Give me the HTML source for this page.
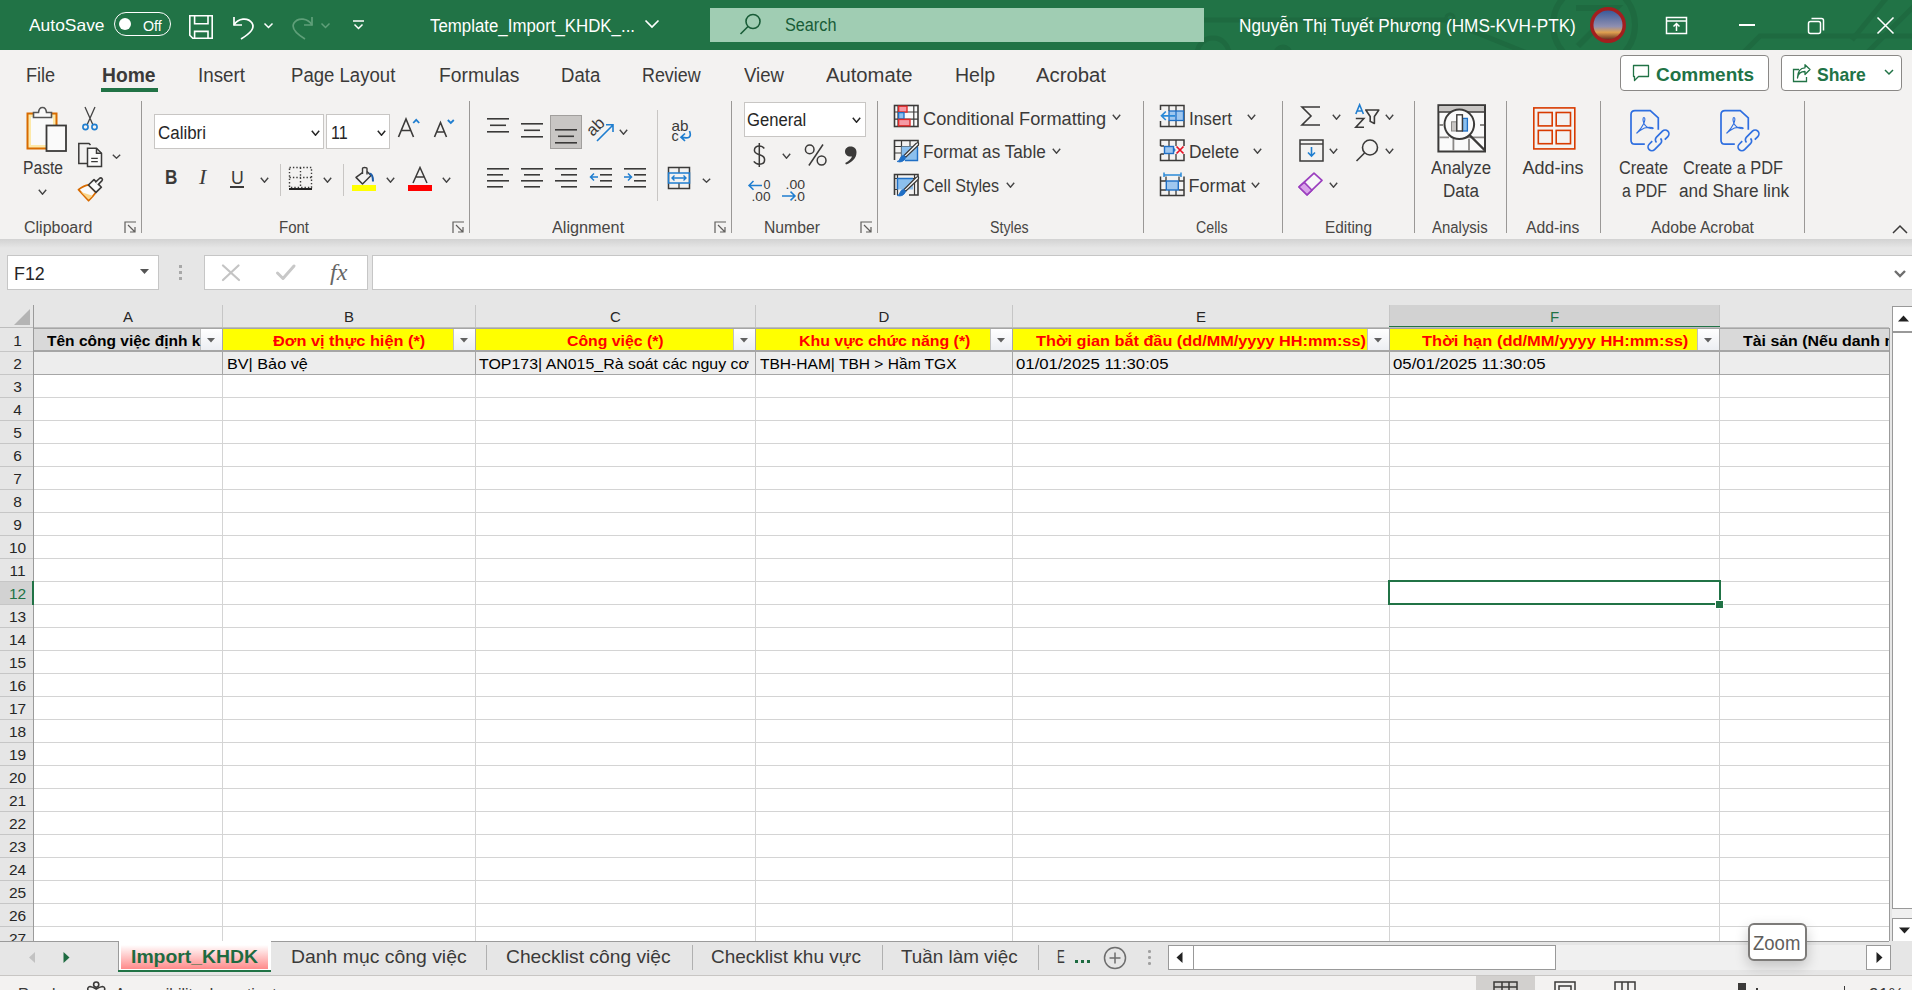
<!DOCTYPE html><html><head><meta charset="utf-8"><style>
html,body{margin:0;padding:0;width:1912px;height:990px;overflow:hidden;background:#f3f2f1;position:relative}
</style></head><body>
<div style="position:absolute;left:0;top:0;width:1912px;height:50px;background:#217346;overflow:hidden">
<svg width="1912" height="50" style="position:absolute;left:0;top:0" fill="none" stroke="#1e6a40" stroke-width="5">
<path d="M1204 20 H1445 L1532 55"/><circle cx="1450" cy="18" r="4" stroke-width="3"/><circle cx="1213" cy="54" r="16"/><circle cx="1283" cy="54" r="7"/>
<circle cx="1594" cy="25" r="41" stroke-width="6"/><path d="M1576 8 H1616 L1578 46" stroke-width="6"/>
<path d="M1742 54 L1760 36 H1912"/><path d="M1852 40 L1888 -4"/><path d="M1866 54 L1914 6"/></svg>
</div>
<div style="position:absolute;left:29px;top:16.83px;font:normal 16.5px/16.5px 'Liberation Sans', sans-serif;color:#fff;white-space:nowrap;"><span id="t_autosave" style="display:inline-block;transform:scaleX(1.0556);transform-origin:left;">AutoSave</span></div>
<div style="position:absolute;left:114px;top:12px;width:57px;height:24px;border:1.3px solid #fff;border-radius:12px;box-sizing:border-box"></div>
<div style="position:absolute;left:119px;top:18px;width:12px;height:12px;background:#fff;border-radius:50%"></div>
<div style="position:absolute;left:143px;top:18.30px;font:normal 15px/15px 'Liberation Sans', sans-serif;color:#fff;white-space:nowrap;"><span id="t_off" style="display:inline-block;transform:scaleX(0.9500);transform-origin:left;">Off</span></div>
<svg style="position:absolute;left:188px;top:14px" width="26" height="26" viewBox="0 0 26 26" fill="none" stroke="#fff" stroke-width="1.6">
<path d="M1.8 1.8 H24.2 V24.2 H4.8 L1.8 21.2 Z"/><path d="M6.6 1.8 V9.8 H20 V1.8"/><path d="M6.6 24.2 V17.4 H20 V24.2"/></svg>
<svg style="position:absolute;left:231px;top:14px" width="26" height="26" viewBox="0 0 26 26" fill="none" stroke="#fff" stroke-width="1.7">
<path d="M3 3 V11 H11"/><path d="M3 11 C7 4 17 3 21 9 C24 14 20 19 10 25"/></svg>
<svg style="position:absolute;left:263px;top:21px" width="11" height="9" viewBox="0 0 11 9" fill="none" stroke="#fff" stroke-width="1.5"><path d="M1.5 2.5 L5.5 6.5 L9.5 2.5"/></svg>
<svg style="position:absolute;left:289px;top:14px" width="26" height="26" viewBox="0 0 26 26" fill="none" stroke="#5f9f79" stroke-width="1.7">
<path d="M23 3 V11 H15"/><path d="M23 11 C19 4 9 3 5 9 C2 14 6 19 16 25"/></svg>
<svg style="position:absolute;left:320px;top:21px" width="11" height="9" viewBox="0 0 11 9" fill="none" stroke="#5f9f79" stroke-width="1.5"><path d="M1.5 2.5 L5.5 6.5 L9.5 2.5"/></svg>
<svg style="position:absolute;left:352px;top:19px" width="13" height="13" viewBox="0 0 13 13" fill="none" stroke="#fff" stroke-width="1.5"><path d="M1 2 H12"/><path d="M2.5 5.5 L6.5 9.5 L10.5 5.5"/></svg>
<div style="position:absolute;left:430px;top:18.19px;font:normal 17.5px/17.5px 'Liberation Sans', sans-serif;color:#fff;white-space:nowrap;"><span id="t_title" style="display:inline-block;transform:scaleX(0.9624);transform-origin:left;">Template_Import_KHDK_...</span></div>
<svg style="position:absolute;left:644px;top:18px" width="16" height="12" viewBox="0 0 16 12" fill="none" stroke="#fff" stroke-width="1.7"><path d="M1.5 2.5 L8 9 L14.5 2.5"/></svg>
<div style="position:absolute;left:710px;top:8px;width:494px;height:34px;background:#a0cdb3"></div>
<svg style="position:absolute;left:738px;top:12px" width="26" height="26" viewBox="0 0 26 26" fill="none" stroke="#185c37" stroke-width="1.6"><circle cx="15" cy="9.5" r="7"/><path d="M10 14.5 L2.5 22"/></svg>
<div style="position:absolute;left:784.5px;top:16.89px;font:normal 17.5px/17.5px 'Liberation Sans', sans-serif;color:#185c37;white-space:nowrap;"><span id="t_search" style="display:inline-block;transform:scaleX(0.9273);transform-origin:left;">Search</span></div>
<div style="position:absolute;left:1239px;top:18.19px;font:normal 17.5px/17.5px 'Liberation Sans', sans-serif;color:#fff;white-space:nowrap;"><span id="t_user" style="display:inline-block;transform:scaleX(0.9825);transform-origin:left;">Nguyễn Thị Tuyết Phương (HMS-KVH-PTK)</span></div>
<svg style="position:absolute;left:1589px;top:6px" width="38" height="38" viewBox="0 0 38 38">
<defs><linearGradient id="av" x1="0" y1="0" x2="0" y2="1"><stop offset="0" stop-color="#3a5a9a"/><stop offset="0.55" stop-color="#8f8fb0"/><stop offset="0.75" stop-color="#e0a050"/><stop offset="1" stop-color="#6a3020"/></linearGradient></defs>
<circle cx="19" cy="19" r="18" fill="#a31e1e"/><circle cx="19" cy="19" r="14.5" fill="url(#av)"/></svg>
<svg style="position:absolute;left:1665px;top:16px" width="24" height="20" viewBox="0 0 24 20" fill="none" stroke="#fff" stroke-width="1.5"><rect x="1.5" y="1.5" width="20" height="16"/><path d="M1.5 5 H21.5"/><path d="M11.5 15 V8 M8.5 10.5 L11.5 7.5 L14.5 10.5"/></svg>
<div style="position:absolute;left:1739px;top:24px;width:16px;height:1.5px;background:#fff"></div>
<svg style="position:absolute;left:1806px;top:16px" width="20" height="20" viewBox="0 0 20 20" fill="none" stroke="#fff" stroke-width="1.5"><rect x="2.5" y="5.5" width="12" height="12" rx="2"/><path d="M5.5 2.5 H15.5 Q17.5 2.5 17.5 4.5 V14.5"/></svg>
<svg style="position:absolute;left:1876px;top:16px" width="19" height="19" viewBox="0 0 19 19" fill="none" stroke="#fff" stroke-width="1.6"><path d="M1.5 1.5 L17.5 17.5 M17.5 1.5 L1.5 17.5"/></svg>
<div style="position:absolute;left:0px;top:50px;width:1912px;height:189px;background:#f3f2f1"></div>
<div style="position:absolute;left:26px;top:65.07px;font:normal 20px/20px 'Liberation Sans', sans-serif;color:#3b3a39;white-space:nowrap;"><span id="tab0" style="display:inline-block;transform:scaleX(0.9062);transform-origin:left;">File</span></div>
<div style="position:absolute;left:102px;top:65.07px;font:bold 20px/20px 'Liberation Sans', sans-serif;color:#3b3a39;white-space:nowrap;"><span id="tab1" style="display:inline-block;transform:scaleX(0.9643);transform-origin:left;">Home</span></div>
<div style="position:absolute;left:198px;top:65.07px;font:normal 20px/20px 'Liberation Sans', sans-serif;color:#3b3a39;white-space:nowrap;"><span id="tab2" style="display:inline-block;transform:scaleX(0.9400);transform-origin:left;">Insert</span></div>
<div style="position:absolute;left:291px;top:65.07px;font:normal 20px/20px 'Liberation Sans', sans-serif;color:#3b3a39;white-space:nowrap;"><span id="tab3" style="display:inline-block;transform:scaleX(0.9286);transform-origin:left;">Page Layout</span></div>
<div style="position:absolute;left:439px;top:65.07px;font:normal 20px/20px 'Liberation Sans', sans-serif;color:#3b3a39;white-space:nowrap;"><span id="tab4" style="display:inline-block;transform:scaleX(0.9639);transform-origin:left;">Formulas</span></div>
<div style="position:absolute;left:561px;top:65.07px;font:normal 20px/20px 'Liberation Sans', sans-serif;color:#3b3a39;white-space:nowrap;"><span id="tab5" style="display:inline-block;transform:scaleX(0.9286);transform-origin:left;">Data</span></div>
<div style="position:absolute;left:642px;top:65.07px;font:normal 20px/20px 'Liberation Sans', sans-serif;color:#3b3a39;white-space:nowrap;"><span id="tab6" style="display:inline-block;transform:scaleX(0.8939);transform-origin:left;">Review</span></div>
<div style="position:absolute;left:744px;top:65.07px;font:normal 20px/20px 'Liberation Sans', sans-serif;color:#3b3a39;white-space:nowrap;"><span id="tab7" style="display:inline-block;transform:scaleX(0.9302);transform-origin:left;">View</span></div>
<div style="position:absolute;left:826px;top:65.07px;font:normal 20px/20px 'Liberation Sans', sans-serif;color:#3b3a39;white-space:nowrap;"><span id="tab8" style="display:inline-block;transform:scaleX(1.0116);transform-origin:left;">Automate</span></div>
<div style="position:absolute;left:955px;top:65.07px;font:normal 20px/20px 'Liberation Sans', sans-serif;color:#3b3a39;white-space:nowrap;"><span id="tab9" style="display:inline-block;transform:scaleX(0.9756);transform-origin:left;">Help</span></div>
<div style="position:absolute;left:1036px;top:65.07px;font:normal 20px/20px 'Liberation Sans', sans-serif;color:#3b3a39;white-space:nowrap;"><span id="tab10" style="display:inline-block;transform:scaleX(1.0145);transform-origin:left;">Acrobat</span></div>
<div style="position:absolute;left:101px;top:88px;width:57px;height:4px;background:#217346"></div>
<div style="position:absolute;left:1620px;top:55px;width:149px;height:36px;border:1px solid #8a8886;border-radius:4px;box-sizing:border-box;background:#fff"></div>
<svg style="position:absolute;left:1630px;top:63px" width="22" height="22" viewBox="0 0 22 22" fill="none" stroke="#217346" stroke-width="1.3"><path d="M3.5 2.5 H18.5 V13.5 H8.5 L4.5 17.5 V13.5 H3.5 Z" stroke-linejoin="round"/></svg>
<div style="position:absolute;left:1656px;top:64.92px;font:bold 19px/19px 'Liberation Sans', sans-serif;color:#217346;white-space:nowrap;"><span id="t_comments" style="display:inline-block;transform:scaleX(1.0000);transform-origin:left;">Comments</span></div>
<div style="position:absolute;left:1781px;top:55px;width:121px;height:36px;border:1px solid #8a8886;border-radius:4px;box-sizing:border-box;background:#fff"></div>
<svg style="position:absolute;left:1791px;top:63px" width="22" height="22" viewBox="0 0 22 22" fill="none" stroke="#217346" stroke-width="1.3"><path d="M8 6.5 H2.5 V18.5 H15.5 V14"/><path d="M6.5 15 C7 10.5 10 8.5 14 8.5 V11.5 L19 6.5 L14 1.8 V4.8 C9.5 4.8 6.5 8.5 6.5 15 Z" stroke-linejoin="round"/></svg>
<div style="position:absolute;left:1817px;top:64.92px;font:bold 19px/19px 'Liberation Sans', sans-serif;color:#217346;white-space:nowrap;"><span id="t_share" style="display:inline-block;transform:scaleX(0.9245);transform-origin:left;">Share</span></div>
<svg style="position:absolute;left:1884px;top:68px" width="10" height="8" viewBox="0 0 10 8" fill="none" stroke="#217346" stroke-width="1.5"><path d="M1 2 L5 6 L9 2"/></svg>
<div style="position:absolute;left:141px;top:101px;width:1px;height:132px;background:#9a9896"></div>
<div style="position:absolute;left:469px;top:101px;width:1px;height:132px;background:#9a9896"></div>
<div style="position:absolute;left:731px;top:101px;width:1px;height:132px;background:#9a9896"></div>
<div style="position:absolute;left:877px;top:101px;width:1px;height:132px;background:#9a9896"></div>
<div style="position:absolute;left:1143px;top:101px;width:1px;height:132px;background:#9a9896"></div>
<div style="position:absolute;left:1282px;top:101px;width:1px;height:132px;background:#9a9896"></div>
<div style="position:absolute;left:1414px;top:101px;width:1px;height:132px;background:#9a9896"></div>
<div style="position:absolute;left:1506px;top:101px;width:1px;height:132px;background:#9a9896"></div>
<div style="position:absolute;left:1600px;top:101px;width:1px;height:132px;background:#9a9896"></div>
<div style="position:absolute;left:1804px;top:101px;width:1px;height:132px;background:#9a9896"></div>
<div style="position:absolute;left:24px;top:220.46px;font:normal 16px/16px 'Liberation Sans', sans-serif;color:#484644;white-space:nowrap;"><span id="g_clip" style="display:inline-block;transform:scaleX(1.0000);transform-origin:left;">Clipboard</span></div>
<div style="position:absolute;left:279px;top:220.46px;font:normal 16px/16px 'Liberation Sans', sans-serif;color:#484644;white-space:nowrap;"><span id="g_font" style="display:inline-block;transform:scaleX(0.9375);transform-origin:left;">Font</span></div>
<div style="position:absolute;left:552px;top:220.46px;font:normal 16px/16px 'Liberation Sans', sans-serif;color:#484644;white-space:nowrap;"><span id="g_align" style="display:inline-block;transform:scaleX(1.0141);transform-origin:left;">Alignment</span></div>
<div style="position:absolute;left:764px;top:220.46px;font:normal 16px/16px 'Liberation Sans', sans-serif;color:#484644;white-space:nowrap;"><span id="g_num" style="display:inline-block;transform:scaleX(0.9825);transform-origin:left;">Number</span></div>
<div style="position:absolute;left:990px;top:220.46px;font:normal 16px/16px 'Liberation Sans', sans-serif;color:#484644;white-space:nowrap;"><span id="g_sty" style="display:inline-block;transform:scaleX(0.8864);transform-origin:left;">Styles</span></div>
<div style="position:absolute;left:1196px;top:220.46px;font:normal 16px/16px 'Liberation Sans', sans-serif;color:#484644;white-space:nowrap;"><span id="g_cells" style="display:inline-block;transform:scaleX(0.8889);transform-origin:left;">Cells</span></div>
<div style="position:absolute;left:1325px;top:220.46px;font:normal 16px/16px 'Liberation Sans', sans-serif;color:#484644;white-space:nowrap;"><span id="g_edit" style="display:inline-block;transform:scaleX(0.9592);transform-origin:left;">Editing</span></div>
<div style="position:absolute;left:1432px;top:220.46px;font:normal 16px/16px 'Liberation Sans', sans-serif;color:#484644;white-space:nowrap;"><span id="g_ana" style="display:inline-block;transform:scaleX(0.9333);transform-origin:left;">Analysis</span></div>
<div style="position:absolute;left:1526px;top:220.46px;font:normal 16px/16px 'Liberation Sans', sans-serif;color:#484644;white-space:nowrap;"><span id="g_addins" style="display:inline-block;transform:scaleX(0.9815);transform-origin:left;">Add-ins</span></div>
<div style="position:absolute;left:1651px;top:220.46px;font:normal 16px/16px 'Liberation Sans', sans-serif;color:#484644;white-space:nowrap;"><span id="g_adobe" style="display:inline-block;transform:scaleX(0.9810);transform-origin:left;">Adobe Acrobat</span></div>
<svg style="position:absolute;left:124px;top:221px" width="13" height="13" viewBox="0 0 13 13" fill="none" stroke="#605e5c" stroke-width="1.2"><path d="M1 12 V1 H12"/><path d="M4 4 L11 11 M11 6 V11 H6"/></svg>
<svg style="position:absolute;left:452px;top:221px" width="13" height="13" viewBox="0 0 13 13" fill="none" stroke="#605e5c" stroke-width="1.2"><path d="M1 12 V1 H12"/><path d="M4 4 L11 11 M11 6 V11 H6"/></svg>
<svg style="position:absolute;left:714px;top:221px" width="13" height="13" viewBox="0 0 13 13" fill="none" stroke="#605e5c" stroke-width="1.2"><path d="M1 12 V1 H12"/><path d="M4 4 L11 11 M11 6 V11 H6"/></svg>
<svg style="position:absolute;left:860px;top:221px" width="13" height="13" viewBox="0 0 13 13" fill="none" stroke="#605e5c" stroke-width="1.2"><path d="M1 12 V1 H12"/><path d="M4 4 L11 11 M11 6 V11 H6"/></svg>
<div id="ribbon-icons"></div>
<svg style="position:absolute;left:24px;top:105px" width="46" height="50" viewBox="0 0 46 50">
<rect x="3.5" y="8.5" width="29" height="35" fill="#fde9a9" stroke="#d86b00" stroke-width="2"/>
<rect x="7" y="12" width="22" height="28" fill="#fafafa" stroke="none"/>
<path d="M9.5 12.5 V7.5 H14.5 Q15 2.5 18.5 2.5 Q22 2.5 22.5 7.5 H27.5 V12.5 Z" fill="#fafafa" stroke="#555" stroke-width="1.6"/>
<rect x="22.5" y="20.5" width="19.5" height="25.5" fill="#fafafa" stroke="#3b3a39" stroke-width="1.8"/></svg>
<div style="position:absolute;left:23px;top:159.26px;font:normal 18px/18px 'Liberation Sans', sans-serif;color:#3b3a39;white-space:nowrap;"><span id="t_paste" style="display:inline-block;transform:scaleX(0.8696);transform-origin:left;">Paste</span></div>
<svg style="position:absolute;left:38px;top:189px" width="9" height="6" viewBox="0 0 9 6" fill="none" stroke="#444" stroke-width="1.4"><path d="M0.8 0.8 L4.5 5.2 L8.2 0.8"/></svg>
<svg style="position:absolute;left:81px;top:106px" width="18" height="26" viewBox="0 0 18 26" fill="none">
<path d="M4 1 L12 19 M14 1 L6 19" stroke="#444" stroke-width="1.3"/>
<circle cx="4.5" cy="21" r="2.6" stroke="#1f7ed0" stroke-width="1.6"/><circle cx="13.5" cy="21" r="2.6" stroke="#1f7ed0" stroke-width="1.6"/></svg>
<svg style="position:absolute;left:77px;top:142px" width="26" height="26" viewBox="0 0 26 26" fill="none" stroke="#3b3a39" stroke-width="1.5">
<path d="M10 21.5 H1.8 V1.5 H12 L13.5 3"/><path d="M10.5 6.2 H19.5 L24.5 11.2 V24.5 H10.5 Z" fill="#fafafa"/><path d="M19.5 6.2 V11.2 H24.5"/><path d="M14.2 16.3 H20.8 M14.2 19.7 H20.8" stroke-width="1.3"/></svg>
<svg style="position:absolute;left:112px;top:154px" width="9" height="5" viewBox="0 0 9 5" fill="none" stroke="#444" stroke-width="1.4"><path d="M0.8 0.8 L4.5 4.2 L8.2 0.8"/></svg>
<svg style="position:absolute;left:75px;top:175px" width="32" height="30" viewBox="0 0 32 30" fill="none">
<path d="M3.5 14.6 Q9 10.5 13.6 9.8 L21 17.3 Q17.5 22 13.6 25.7 Z" fill="#fafafa" stroke="#d86b00" stroke-width="1.8" stroke-linejoin="round"/>
<path d="M6 17 L17.6 20.8 L13.6 24.6 Z" fill="#fbd68a"/>
<path d="M13.4 10 L19 4.6 L26.4 12.2 L21 17.4 Z" fill="#fafafa" stroke="#3b3a39" stroke-width="1.6" stroke-linejoin="round"/>
<path d="M20.3 7.3 L24.4 3.5 Q25.9 2.4 27 3.5 Q28 4.6 26.8 5.9 L22.9 9.9" fill="#fafafa" stroke="#3b3a39" stroke-width="1.6"/></svg>
<div style="position:absolute;left:154px;top:114px;width:170px;height:35px;background:#fff;border:1px solid #c8c6c4;box-sizing:border-box"></div>
<div style="position:absolute;left:157.5px;top:123.76px;font:normal 18px/18px 'Liberation Sans', sans-serif;color:#262626;white-space:nowrap;"><span id="t_calibri" style="display:inline-block;transform:scaleX(0.9412);transform-origin:left;">Calibri</span></div>
<svg style="position:absolute;left:311px;top:129.5px" width="9" height="6" viewBox="0 0 9 6" fill="none" stroke="#262626" stroke-width="1.5"><path d="M0.8 0.8 L4.5 5.2 L8.2 0.8"/></svg>
<div style="position:absolute;left:326px;top:114px;width:64px;height:35px;background:#fff;border:1px solid #c8c6c4;box-sizing:border-box"></div>
<div style="position:absolute;left:331px;top:123.76px;font:normal 18px/18px 'Liberation Sans', sans-serif;color:#262626;white-space:nowrap;"><span id="t_11" style="display:inline-block;transform:scaleX(0.8947);transform-origin:left;">11</span></div>
<svg style="position:absolute;left:377px;top:129.5px" width="9" height="6" viewBox="0 0 9 6" fill="none" stroke="#262626" stroke-width="1.5"><path d="M0.8 0.8 L4.5 5.2 L8.2 0.8"/></svg>
<svg style="position:absolute;left:397px;top:117px" width="26" height="22" viewBox="0 0 26 22" fill="none" stroke-width="1.6">
<path d="M1.5 20 L9 2 L16.5 20 M4.5 13.5 H13.5" stroke="#3b3a39"/><path d="M16.2 6 L19.2 2.8 L22.2 6" stroke="#1f7ed0" stroke-width="1.8"/></svg>
<svg style="position:absolute;left:433px;top:117px" width="24" height="22" viewBox="0 0 24 22" fill="none" stroke-width="1.6">
<path d="M1.5 20 L7.5 5.5 L13.5 20 M3.8 15 H11.2" stroke="#3b3a39"/><path d="M14.8 3 L17.8 6 L20.8 3" stroke="#1f7ed0" stroke-width="1.8"/></svg>
<div style="position:absolute;left:164.5px;top:167.47px;font:bold 20px/20px 'Liberation Sans', sans-serif;color:#3b3a39;white-space:nowrap;"><span id="t_B" style="display:inline-block;transform:scaleX(0.8571);transform-origin:left;">B</span></div>
<div style="position:absolute;left:199px;top:166px;font:italic 22px/22px 'Liberation Serif', serif;color:#3b3a39">I</div>
<div style="position:absolute;left:230.5px;top:167.92px;font:normal 19px/19px 'Liberation Sans', sans-serif;color:#3b3a39;white-space:nowrap;"><span id="t_U" style="display:inline-block;transform:scaleX(0.9286);transform-origin:left;">U</span></div>
<div style="position:absolute;left:230px;top:186px;width:14px;height:1.6px;background:#3b3a39"></div>
<svg style="position:absolute;left:260px;top:177px" width="9" height="6" viewBox="0 0 9 6" fill="none" stroke="#444" stroke-width="1.4"><path d="M0.8 0.8 L4.5 5.2 L8.2 0.8"/></svg>
<div style="position:absolute;left:280px;top:164px;width:1px;height:32px;background:#c8c6c4"></div>
<svg style="position:absolute;left:288px;top:166px" width="25" height="24" viewBox="0 0 25 24" fill="none" stroke="#3b3a39" stroke-width="1.4" stroke-dasharray="1.4 2">
<rect x="1.5" y="1.5" width="22" height="20"/><path d="M12.5 1.5 V21.5 M1.5 11.5 H23.5"/></svg>
<div style="position:absolute;left:289px;top:187.5px;width:23px;height:2px;background:#222"></div>
<svg style="position:absolute;left:323px;top:177px" width="9" height="6" viewBox="0 0 9 6" fill="none" stroke="#444" stroke-width="1.4"><path d="M0.8 0.8 L4.5 5.2 L8.2 0.8"/></svg>
<div style="position:absolute;left:343px;top:164px;width:1px;height:32px;background:#c8c6c4"></div>
<svg style="position:absolute;left:350px;top:165px" width="26" height="21" viewBox="0 0 26 21" fill="none">
<path d="M12.5 7.6 L6 12.4 L12.5 19 L21 10.5 L17 6.5" stroke="#3b3a39" stroke-width="1.5" stroke-linejoin="round"/><path d="M12.5 9 V3.6 Q12.5 2.5 14.5 2.5 Q17 2.5 17 3.6 V9.6" stroke="#3b3a39" stroke-width="1.4"/>
<path d="M19.5 8.6 Q23 9 23 16.5" stroke="#1f5ea8" stroke-width="2"/></svg>
<div style="position:absolute;left:352px;top:185px;width:24px;height:6px;background:#ffff00"></div>
<svg style="position:absolute;left:386px;top:177px" width="9" height="6" viewBox="0 0 9 6" fill="none" stroke="#444" stroke-width="1.4"><path d="M0.8 0.8 L4.5 5.2 L8.2 0.8"/></svg>
<svg style="position:absolute;left:411px;top:166px" width="18" height="18" viewBox="0 0 18 18" fill="none" stroke="#3b3a39" stroke-width="1.5"><path d="M2 17 L9 1.5 L16 17 M4.8 11 H13.2"/></svg>
<div style="position:absolute;left:408px;top:185px;width:24px;height:6px;background:#ff0000"></div>
<svg style="position:absolute;left:442px;top:177px" width="9" height="6" viewBox="0 0 9 6" fill="none" stroke="#444" stroke-width="1.4"><path d="M0.8 0.8 L4.5 5.2 L8.2 0.8"/></svg>
<svg style="position:absolute;left:487px;top:117px" width="30" height="30"><rect x="0" y="1" width="22" height="1.6" fill="#3b3a39"/><rect x="3" y="7.5" width="16" height="1.6" fill="#3b3a39"/><rect x="0" y="14" width="22" height="1.6" fill="#3b3a39"/></svg>
<svg style="position:absolute;left:521px;top:122px" width="30" height="30"><rect x="0" y="1" width="22" height="1.6" fill="#3b3a39"/><rect x="3" y="7.5" width="16" height="1.6" fill="#3b3a39"/><rect x="0" y="14" width="22" height="1.6" fill="#3b3a39"/></svg>
<div style="position:absolute;left:550px;top:115px;width:32px;height:34px;background:#c8c6c4;border:1px solid #a19f9d;box-sizing:border-box"></div>
<svg style="position:absolute;left:555px;top:128px" width="30" height="30"><rect x="0" y="1" width="22" height="1.6" fill="#3b3a39"/><rect x="3" y="7.5" width="16" height="1.6" fill="#3b3a39"/><rect x="0" y="14" width="22" height="1.6" fill="#3b3a39"/></svg>
<svg style="position:absolute;left:580px;top:105px" width="40" height="45" viewBox="0 0 40 45" fill="none">
<text x="0" y="0" transform="translate(12.8 32) rotate(-45)" font-family="Liberation Sans" font-size="16.5" fill="#3b3a39">ab</text>
<path d="M17 36 L32.5 20.5 M26 19.8 H33 V27" stroke="#1f7ed0" stroke-width="1.6"/></svg>
<svg style="position:absolute;left:619px;top:129px" width="9" height="6" viewBox="0 0 9 6" fill="none" stroke="#444" stroke-width="1.4"><path d="M0.8 0.8 L4.5 5.2 L8.2 0.8"/></svg>
<div style="position:absolute;left:657px;top:110px;width:1px;height:91px;background:#c8c6c4"></div>
<svg style="position:absolute;left:660px;top:105px" width="40" height="45" viewBox="0 0 40 45" fill="none">
<text x="11.5" y="25.6" font-family="Liberation Sans" font-size="14.5" fill="#3b3a39" textLength="17" lengthAdjust="spacingAndGlyphs">ab</text>
<text x="11.5" y="36.2" font-family="Liberation Sans" font-size="14.5" fill="#3b3a39">c</text>
<path d="M29.5 26 Q33 35 21.5 32.2 M25 28.5 L21 32.2 L25 36" stroke="#1f7ed0" stroke-width="1.7"/></svg>
<svg style="position:absolute;left:487px;top:167px" width="30" height="30"><rect x="0" y="1" width="22" height="1.6" fill="#3b3a39"/><rect x="0" y="7" width="16" height="1.6" fill="#3b3a39"/><rect x="0" y="13" width="22" height="1.6" fill="#3b3a39"/><rect x="0" y="19" width="16" height="1.6" fill="#3b3a39"/></svg>
<svg style="position:absolute;left:521px;top:167px" width="30" height="30"><rect x="0" y="1" width="22" height="1.6" fill="#3b3a39"/><rect x="3" y="7" width="16" height="1.6" fill="#3b3a39"/><rect x="0" y="13" width="22" height="1.6" fill="#3b3a39"/><rect x="3" y="19" width="16" height="1.6" fill="#3b3a39"/></svg>
<svg style="position:absolute;left:555px;top:167px" width="30" height="30"><rect x="0" y="1" width="22" height="1.6" fill="#3b3a39"/><rect x="6" y="7" width="16" height="1.6" fill="#3b3a39"/><rect x="0" y="13" width="22" height="1.6" fill="#3b3a39"/><rect x="6" y="19" width="16" height="1.6" fill="#3b3a39"/></svg>
<svg style="position:absolute;left:590px;top:167px" width="30" height="30"><rect x="0" y="1" width="22" height="1.6" fill="#3b3a39"/><rect x="10" y="7" width="12" height="1.6" fill="#3b3a39"/><rect x="10" y="13" width="12" height="1.6" fill="#3b3a39"/><rect x="0" y="19" width="22" height="1.6" fill="#3b3a39"/></svg>
<svg style="position:absolute;left:589px;top:171px" width="10" height="12" fill="none" stroke="#1f7ed0" stroke-width="1.5"><path d="M9 6 H2 M5 2.5 L1.5 6 L5 9.5"/></svg>
<svg style="position:absolute;left:624px;top:167px" width="30" height="30"><rect x="0" y="1" width="22" height="1.6" fill="#3b3a39"/><rect x="10" y="7" width="12" height="1.6" fill="#3b3a39"/><rect x="10" y="13" width="12" height="1.6" fill="#3b3a39"/><rect x="0" y="19" width="22" height="1.6" fill="#3b3a39"/></svg>
<svg style="position:absolute;left:623px;top:171px" width="10" height="12" fill="none" stroke="#1f7ed0" stroke-width="1.5"><path d="M1 6 H8 M5 2.5 L8.5 6 L5 9.5"/></svg>
<svg style="position:absolute;left:667px;top:166px" width="25" height="25" viewBox="0 0 25 25" fill="none">
<rect x="1.5" y="1.5" width="21" height="21" stroke="#3b3a39" stroke-width="1.5"/><path d="M12 1.5 V7 M12 17 V22.5" stroke="#3b3a39" stroke-width="1.3"/>
<rect x="1.5" y="7" width="21" height="10" stroke="#1f7ed0" stroke-width="1.5"/><path d="M5 12 H19 M7.5 9.5 L5 12 L7.5 14.5 M16.5 9.5 L19 12 L16.5 14.5" stroke="#1f7ed0" stroke-width="1.4"/></svg>
<svg style="position:absolute;left:702px;top:178px" width="9" height="5" viewBox="0 0 9 5" fill="none" stroke="#444" stroke-width="1.4"><path d="M0.8 0.8 L4.5 4.2 L8.2 0.8"/></svg>
<div style="position:absolute;left:744px;top:102px;width:122px;height:35px;background:#fff;border:1px solid #c8c6c4;box-sizing:border-box"></div>
<div style="position:absolute;left:747px;top:112.19px;font:normal 17.5px/17.5px 'Liberation Sans', sans-serif;color:#262626;white-space:nowrap;"><span id="t_general" style="display:inline-block;transform:scaleX(0.9516);transform-origin:left;">General</span></div>
<svg style="position:absolute;left:852px;top:117px" width="9" height="6" viewBox="0 0 9 6" fill="none" stroke="#262626" stroke-width="1.5"><path d="M0.8 0.8 L4.5 5.2 L8.2 0.8"/></svg>
<svg style="position:absolute;left:750px;top:140px" width="20" height="30" viewBox="0 0 20 30" fill="none" stroke="#3b3a39" stroke-width="1.5">
<path d="M9.3 3 V27"/><path d="M14.3 8.5 C13.2 6.8 11.6 6 9.4 6 C6.4 6 4.4 7.6 4.4 10.2 C4.4 13.2 7.2 14 9.6 14.7 C12.3 15.5 14.6 16.6 14.6 19.7 C14.6 22.6 12.3 24.2 9.3 24.2 C6.8 24.2 5 23.2 3.8 21.4"/></svg>
<svg style="position:absolute;left:782px;top:153px" width="9" height="6" viewBox="0 0 9 6" fill="none" stroke="#444" stroke-width="1.4"><path d="M0.8 0.8 L4.5 5.2 L8.2 0.8"/></svg>
<svg style="position:absolute;left:800px;top:140px" width="30" height="30" viewBox="0 0 30 30" fill="none" stroke="#3b3a39" stroke-width="1.5">
<circle cx="9.7" cy="9.4" r="4.3"/><circle cx="21.6" cy="20.5" r="4.4"/><path d="M8.9 25.5 L23 4.5"/></svg>
<svg style="position:absolute;left:844px;top:146px" width="13" height="19" viewBox="0 0 13 19"><path d="M6.5 0.5 C10.5 0.5 12.5 3 12.5 6.5 C12.5 12 8 16.5 2 18.5 L1.2 17 C5 15 7.5 12.5 8 10.5 C3.5 11 1 8.5 1 5.5 C1 2.5 3.5 0.5 6.5 0.5 Z" fill="#3b3a39"/></svg>
<svg style="position:absolute;left:740px;top:170px" width="70" height="36" viewBox="0 0 70 36" fill="none">
<path d="M22 15.4 H9 M13.5 11 L9 15.4 L13.5 19.8" stroke="#1f7ed0" stroke-width="1.5"/>
<text x="23.6" y="19.3" font-family="Liberation Sans" font-size="13.5" fill="#3b3a39" textLength="7" lengthAdjust="spacingAndGlyphs">0</text>
<text x="11.5" y="31.3" font-family="Liberation Sans" font-size="13.5" fill="#3b3a39" textLength="19" lengthAdjust="spacingAndGlyphs">.00</text>
<text x="45.5" y="19.3" font-family="Liberation Sans" font-size="13.5" fill="#3b3a39" textLength="19.5" lengthAdjust="spacingAndGlyphs">.00</text>
<path d="M42 26 H55 M50.5 21.6 L55 26 L50.5 30.4" stroke="#1f7ed0" stroke-width="1.5"/>
<text x="53.5" y="31.3" font-family="Liberation Sans" font-size="13.5" fill="#3b3a39" textLength="11.5" lengthAdjust="spacingAndGlyphs">.0</text></svg>
<svg style="position:absolute;left:893px;top:104px" width="26" height="24" viewBox="0 0 26 24" fill="none">
<rect x="1.5" y="1.5" width="23.5" height="21" fill="#fafafa" stroke="#3b3a39" stroke-width="1.6"/>
<path d="M1.5 8 H25 M1.5 15.2 H25 M5 1.5 V22.5 M20.8 1.5 V22.5" stroke="#3b3a39" stroke-width="1.2"/>
<rect x="5.6" y="2.2" width="8.4" height="5.8" fill="#f59aa5" stroke="#e02b2b" stroke-width="1.4"/>
<rect x="5.6" y="8.6" width="5.4" height="6.2" fill="#8cc0ee" stroke="#1f6fc5" stroke-width="1.3"/>
<rect x="5.6" y="15.4" width="11.4" height="6.4" fill="#f59aa5" stroke="#e02b2b" stroke-width="1.4"/></svg>
<div style="position:absolute;left:922.5px;top:110.06px;font:normal 18px/18px 'Liberation Sans', sans-serif;color:#3b3a39;white-space:nowrap;"><span id="t_cf" style="display:inline-block;transform:scaleX(1.0110);transform-origin:left;">Conditional Formatting</span></div>
<svg style="position:absolute;left:1112px;top:114px" width="9" height="6" viewBox="0 0 9 6" fill="none" stroke="#444" stroke-width="1.4"><path d="M0.8 0.8 L4.5 5.2 L8.2 0.8"/></svg>
<svg style="position:absolute;left:893px;top:139px" width="27" height="24" viewBox="0 0 27 24" fill="none"><path d="M1.5 21 V1.5 H25 V7" stroke="#3b3a39" stroke-width="1.6"/><path d="M1.5 7.5 H25 M1.5 14 H8 M8.5 1.5 V21 M17 1.5 V7.5" stroke="#3b3a39" stroke-width="1.2"/><path d="M8.5 7.5 H24.5 V21.5 H8.5 Z" fill="#8cc0ee"/><path d="M24.5 7.5 V21.5 H12" stroke="#1f6fc5" stroke-width="1.4"/>
<path d="M11 16.5 L23 4.5 Q25 3 25.6 4.4 Q26 5.6 24.5 7 L12.6 18.2 Z" fill="#fafafa" stroke="#3b3a39" stroke-width="1.2" stroke-linejoin="round"/>
<path d="M10.8 16.2 Q8 16.5 7 19.5 Q6.5 22 4 22.5 Q10 24.5 12.8 18.4 Z" fill="#1f6fc5" stroke="#1f6fc5" stroke-width="0.8"/></svg>
<div style="position:absolute;left:923px;top:143.06px;font:normal 18px/18px 'Liberation Sans', sans-serif;color:#3b3a39;white-space:nowrap;"><span id="t_fat" style="display:inline-block;transform:scaleX(0.9535);transform-origin:left;">Format as Table</span></div>
<svg style="position:absolute;left:1052px;top:148px" width="9" height="6" viewBox="0 0 9 6" fill="none" stroke="#444" stroke-width="1.4"><path d="M0.8 0.8 L4.5 5.2 L8.2 0.8"/></svg>
<svg style="position:absolute;left:893px;top:173px" width="27" height="24" viewBox="0 0 27 24" fill="none"><path d="M1.5 22 V1.5 H25 V22 H16" stroke="#3b3a39" stroke-width="1.6"/><path d="M1.5 5.5 H25 M1.5 16.5 H4.5 M4.5 1.5 V22 M21.5 1.5 V22" stroke="#3b3a39" stroke-width="1.2"/><path d="M4.5 5.5 H20 V16.5 H4.5 Z" fill="#8cc0ee"/><path d="M4.5 16.5 V5.5 H20" stroke="#1f6fc5" stroke-width="1.4"/>
<path d="M11 16.5 L23 4.5 Q25 3 25.6 4.4 Q26 5.6 24.5 7 L12.6 18.2 Z" fill="#fafafa" stroke="#3b3a39" stroke-width="1.2" stroke-linejoin="round"/>
<path d="M10.8 16.2 Q8 16.5 7 19.5 Q6.5 22 4 22.5 Q10 24.5 12.8 18.4 Z" fill="#1f6fc5" stroke="#1f6fc5" stroke-width="0.8"/></svg>
<div style="position:absolute;left:922.5px;top:176.96px;font:normal 18px/18px 'Liberation Sans', sans-serif;color:#3b3a39;white-space:nowrap;"><span id="t_cs" style="display:inline-block;transform:scaleX(0.8941);transform-origin:left;">Cell Styles</span></div>
<svg style="position:absolute;left:1006px;top:182px" width="9" height="6" viewBox="0 0 9 6" fill="none" stroke="#444" stroke-width="1.4"><path d="M0.8 0.8 L4.5 5.2 L8.2 0.8"/></svg>
<svg style="position:absolute;left:1159px;top:104px" width="27" height="24" viewBox="0 0 27 24" fill="none">
<path d="M1.5 6 V1.5 H25 V22.5 H1.5 V17" stroke="#3b3a39" stroke-width="1.5"/><path d="M10 1.5 V7 M17 1.5 V7 M10 16.5 V22.5 M17 16.5 V22.5" stroke="#3b3a39" stroke-width="1.3"/>
<rect x="10" y="7" width="14.5" height="9.5" fill="#9fc7ef" stroke="#1f6fc5" stroke-width="1.3"/><path d="M17 7 V16.5" stroke="#1f6fc5" stroke-width="1.3"/>
<path d="M16 11.8 H2.5 M6.8 7.5 L2.5 11.8 L6.8 16" stroke="#2b8ad8" stroke-width="1.7"/></svg>
<svg style="position:absolute;left:1159px;top:139px" width="27" height="23" viewBox="0 0 27 23" fill="none">
<path d="M1.5 7 V1 H25 V7 M1.5 15 V21.5 H25 V15" stroke="#3b3a39" stroke-width="1.5"/><path d="M10 1 V7 M17 1 V7 M10 15 V21.5 M17 15 V21.5 M1.5 7 H5 M1.5 15 H5" stroke="#3b3a39" stroke-width="1.3"/>
<rect x="5.5" y="7.5" width="9" height="7" fill="#9fc7ef" stroke="#1f6fc5" stroke-width="1.4"/><path d="M14.5 9 L16 11 L14.5 13" stroke="#1f6fc5" stroke-width="1.2"/>
<path d="M17.5 7.5 L24.5 14.5 M24.5 7.5 L17.5 14.5" stroke="#e81123" stroke-width="1.7"/></svg>
<svg style="position:absolute;left:1159px;top:172px" width="27" height="25" viewBox="0 0 27 25" fill="none">
<path d="M5 3 H22 M5 0.5 V5 M22 0.5 V5" stroke="#2b8ad8" stroke-width="1.5"/>
<path d="M1.5 4.5 V23.5 H25 V4.5" stroke="#3b3a39" stroke-width="1.5"/><path d="M1.5 9 H7 M20 9 H25 M1.5 18 H7 M20 18 H25 M10 18 V23.5 M17 18 V23.5 M7 4.5 V9 M20 4.5 V9" stroke="#3b3a39" stroke-width="1.3"/>
<rect x="7.3" y="9" width="12" height="9" fill="#9fc7ef" stroke="#1f6fc5" stroke-width="1.4"/></svg>
<div style="position:absolute;left:1188.5px;top:110.06px;font:normal 18px/18px 'Liberation Sans', sans-serif;color:#3b3a39;white-space:nowrap;"><span id="t_ins" style="display:inline-block;transform:scaleX(0.9556);transform-origin:left;">Insert</span></div>
<svg style="position:absolute;left:1247px;top:114px" width="9" height="6" viewBox="0 0 9 6" fill="none" stroke="#444" stroke-width="1.4"><path d="M0.8 0.8 L4.5 5.2 L8.2 0.8"/></svg>
<div style="position:absolute;left:1188.5px;top:143.06px;font:normal 18px/18px 'Liberation Sans', sans-serif;color:#3b3a39;white-space:nowrap;"><span id="t_del" style="display:inline-block;transform:scaleX(0.9615);transform-origin:left;">Delete</span></div>
<svg style="position:absolute;left:1253px;top:148px" width="9" height="6" viewBox="0 0 9 6" fill="none" stroke="#444" stroke-width="1.4"><path d="M0.8 0.8 L4.5 5.2 L8.2 0.8"/></svg>
<div style="position:absolute;left:1188.5px;top:176.96px;font:normal 18px/18px 'Liberation Sans', sans-serif;color:#3b3a39;white-space:nowrap;"><span id="t_fmt" style="display:inline-block;transform:scaleX(1.0000);transform-origin:left;">Format</span></div>
<svg style="position:absolute;left:1251px;top:182px" width="9" height="6" viewBox="0 0 9 6" fill="none" stroke="#444" stroke-width="1.4"><path d="M0.8 0.8 L4.5 5.2 L8.2 0.8"/></svg>
<svg style="position:absolute;left:1300px;top:105px" width="22" height="22" viewBox="0 0 22 22" fill="none" stroke="#3b3a39" stroke-width="1.6"><path d="M20 2 H2 L11 11 L2 20 H20"/></svg>
<svg style="position:absolute;left:1332px;top:114px" width="9" height="6" viewBox="0 0 9 6" fill="none" stroke="#444" stroke-width="1.4"><path d="M0.8 0.8 L4.5 5.2 L8.2 0.8"/></svg>
<svg style="position:absolute;left:1353px;top:103px" width="27" height="26" viewBox="0 0 27 26" fill="none">
<path d="M2.8 11 L6.6 1.8 L10.4 11 M4 8 H9.2" stroke="#1f7ed0" stroke-width="1.6"/><path d="M2.8 15.5 H10.8 L2.8 24.2 H11" stroke="#3b3a39" stroke-width="1.6"/>
<path d="M12.8 7 H25.8 L21.4 13.5 V20.5 L17.2 18.4 V13.5 Z" stroke="#3b3a39" stroke-width="1.6" stroke-linejoin="round"/></svg>
<svg style="position:absolute;left:1385px;top:114px" width="9" height="6" viewBox="0 0 9 6" fill="none" stroke="#444" stroke-width="1.4"><path d="M0.8 0.8 L4.5 5.2 L8.2 0.8"/></svg>
<svg style="position:absolute;left:1299px;top:139px" width="25" height="23" viewBox="0 0 25 23" fill="none">
<rect x="1" y="1" width="23" height="21" stroke="#3b3a39" stroke-width="1.5"/><path d="M1 5 H24" stroke="#3b3a39" stroke-width="1.4"/>
<path d="M12.5 8 V17 M9 13.5 L12.5 17 L16 13.5" stroke="#1f7ed0" stroke-width="1.6"/></svg>
<svg style="position:absolute;left:1329px;top:148px" width="9" height="6" viewBox="0 0 9 6" fill="none" stroke="#444" stroke-width="1.4"><path d="M0.8 0.8 L4.5 5.2 L8.2 0.8"/></svg>
<svg style="position:absolute;left:1355px;top:138px" width="25" height="24" viewBox="0 0 25 24" fill="none" stroke="#3b3a39" stroke-width="1.6"><circle cx="15" cy="9.5" r="7.5"/><path d="M9.5 15 L1.5 23"/></svg>
<svg style="position:absolute;left:1385px;top:148px" width="9" height="6" viewBox="0 0 9 6" fill="none" stroke="#444" stroke-width="1.4"><path d="M0.8 0.8 L4.5 5.2 L8.2 0.8"/></svg>
<svg style="position:absolute;left:1297px;top:171px" width="28" height="26" viewBox="0 0 28 26" fill="none">
<path d="M2 16 L17 2.2 L25 9.4 L10 23.8 Z" fill="#f7f7f7" stroke="#9b3fbf" stroke-width="1.7" stroke-linejoin="round"/><path d="M2 16 L7.3 11.4 L15 19.2 L10 23.8 Z" fill="#d9a3ea" stroke="#9b3fbf" stroke-width="1.6" stroke-linejoin="round"/></svg>
<svg style="position:absolute;left:1329px;top:182px" width="9" height="6" viewBox="0 0 9 6" fill="none" stroke="#444" stroke-width="1.4"><path d="M0.8 0.8 L4.5 5.2 L8.2 0.8"/></svg>
<svg style="position:absolute;left:1425px;top:98px" width="65" height="58" viewBox="0 0 65 58" fill="none">
<rect x="13.4" y="7.2" width="46.6" height="46.3" fill="#fafafa" stroke="#3b3a39" stroke-width="2"/><rect x="14.4" y="8.2" width="44.6" height="5.6" fill="#c8c6c4"/>
<path d="M14 14 H59" stroke="#3b3a39" stroke-width="1.6"/>
<path d="M14 27 H18 M55 27 H59 M14 39.3 H24 M40 39.3 H59 M28.4 41 V53 M44 41 V53" stroke="#8a8886" stroke-width="1.8"/>
<circle cx="34.3" cy="26.3" r="14.8" fill="#fafafa" stroke="#3b3a39" stroke-width="2"/>
<path d="M44.5 37 L60 52.5" stroke="#3b3a39" stroke-width="2.4"/>
<rect x="26.5" y="23.8" width="5" height="9.2" fill="#c8c6c4" stroke="#8a8886" stroke-width="1"/>
<rect x="37.6" y="20.4" width="4.8" height="12.6" fill="#8cc0ee" stroke="#1f6fc5" stroke-width="1.3"/>
<rect x="31.8" y="16.8" width="5.6" height="16.2" fill="#fff" stroke="#3b3a39" stroke-width="1.4"/></svg>
<div style="position:absolute;left:1430.5px;top:158.76px;font:normal 18px/18px 'Liberation Sans', sans-serif;color:#3b3a39;white-space:nowrap;"><span id="t_an1" style="display:inline-block;transform:scaleX(0.9375);transform-origin:left;">Analyze</span></div>
<div style="position:absolute;left:1443px;top:182.36px;font:normal 18px/18px 'Liberation Sans', sans-serif;color:#3b3a39;white-space:nowrap;"><span id="t_an2" style="display:inline-block;transform:scaleX(0.9474);transform-origin:left;">Data</span></div>
<svg style="position:absolute;left:1532px;top:106px" width="45" height="45" viewBox="0 0 45 45" fill="none" stroke="#d83b01" stroke-width="1.6">
<rect x="1.8" y="1.9" width="41" height="41"/><rect x="6.3" y="6.5" width="13.9" height="13.4"/><rect x="24.2" y="6.5" width="14.3" height="13.4"/><rect x="6.3" y="24.4" width="13.9" height="13.3"/><rect x="24.2" y="24.4" width="14.3" height="13.3"/></svg>
<div style="position:absolute;left:1522.5px;top:158.76px;font:normal 18px/18px 'Liberation Sans', sans-serif;color:#3b3a39;white-space:nowrap;"><span id="t_addins" style="display:inline-block;transform:scaleX(1.0000);transform-origin:left;">Add-ins</span></div>
<svg style="position:absolute;left:1620px;top:100px" width="60" height="60" viewBox="0 0 60 60" fill="none" stroke="#2f6fe0">
<path d="M24.8 44.2 H15 Q11 44.2 11 40.2 V14.6 Q11 10.6 15 10.6 H30.3 L38.3 17.8 V29.7" stroke-width="1.7"/>
<path d="M17 33 C19 31 21.5 28 23.5 24 C25 21 25.5 18 24 17.5 C22.8 17.5 22.5 20 24 23.5 C25.5 26.5 28 28 31 28.5 C33.5 29 34 28 32 27.5 C29 27 24 27.5 20 30.5 C18 32 16 33.5 17 33 Z" stroke-width="1.1"/>
<path d="M-2 3.8 H2.3 A3.8 3.8 0 0 0 2.3 -3.8 H-6.1 A3.8 3.8 0 0 0 -9.9 0" transform="translate(43.5 35.5) rotate(-45)" stroke-width="1.7"/>
<path d="M2 -3.8 H-2.3 A3.8 3.8 0 0 0 -2.3 3.8 H6.1 A3.8 3.8 0 0 0 9.9 0" transform="translate(33.5 45.3) rotate(-45)" stroke-width="1.7"/></svg>
<svg style="position:absolute;left:1710px;top:100px" width="60" height="60" viewBox="0 0 60 60" fill="none" stroke="#2f6fe0">
<path d="M24.8 44.2 H15 Q11 44.2 11 40.2 V14.6 Q11 10.6 15 10.6 H30.3 L38.3 17.8 V29.7" stroke-width="1.7"/>
<path d="M17 33 C19 31 21.5 28 23.5 24 C25 21 25.5 18 24 17.5 C22.8 17.5 22.5 20 24 23.5 C25.5 26.5 28 28 31 28.5 C33.5 29 34 28 32 27.5 C29 27 24 27.5 20 30.5 C18 32 16 33.5 17 33 Z" stroke-width="1.1"/>
<path d="M-2 3.8 H2.3 A3.8 3.8 0 0 0 2.3 -3.8 H-6.1 A3.8 3.8 0 0 0 -9.9 0" transform="translate(43.5 35.5) rotate(-45)" stroke-width="1.7"/>
<path d="M2 -3.8 H-2.3 A3.8 3.8 0 0 0 -2.3 3.8 H6.1 A3.8 3.8 0 0 0 9.9 0" transform="translate(33.5 45.3) rotate(-45)" stroke-width="1.7"/></svg>
<div style="position:absolute;left:1619px;top:158.76px;font:normal 18px/18px 'Liberation Sans', sans-serif;color:#3b3a39;white-space:nowrap;"><span id="t_cr1" style="display:inline-block;transform:scaleX(0.9074);transform-origin:left;">Create</span></div>
<div style="position:absolute;left:1621.5px;top:182.36px;font:normal 18px/18px 'Liberation Sans', sans-serif;color:#3b3a39;white-space:nowrap;"><span id="t_cr2" style="display:inline-block;transform:scaleX(0.8824);transform-origin:left;">a PDF</span></div>
<div style="position:absolute;left:1683px;top:158.76px;font:normal 18px/18px 'Liberation Sans', sans-serif;color:#3b3a39;white-space:nowrap;"><span id="t_cr3" style="display:inline-block;transform:scaleX(0.9091);transform-origin:left;">Create a PDF</span></div>
<div style="position:absolute;left:1678.5px;top:182.36px;font:normal 18px/18px 'Liberation Sans', sans-serif;color:#3b3a39;white-space:nowrap;"><span id="t_cr4" style="display:inline-block;transform:scaleX(0.9565);transform-origin:left;">and Share link</span></div>
<svg style="position:absolute;left:1892px;top:224px" width="16" height="10" viewBox="0 0 16 10" fill="none" stroke="#3b3a39" stroke-width="1.5"><path d="M1 9 L8 2 L15 9"/></svg>
<div style="position:absolute;left:0px;top:239px;width:1912px;height:737px;background:#e6e6e6"></div>
<div style="position:absolute;left:0px;top:239px;width:1912px;height:9px;background:linear-gradient(#d2d2d2,#e6e6e6)"></div>
<div style="position:absolute;left:7px;top:255px;width:152px;height:35px;background:#fff;border:1px solid #c6c6c6;box-sizing:border-box"></div>
<div style="position:absolute;left:14px;top:264.12px;font:normal 19px/19px 'Liberation Sans', sans-serif;color:#262626;white-space:nowrap;"><span id="t_f12" style="display:inline-block;transform:scaleX(0.9394);transform-origin:left;">F12</span></div>
<svg style="position:absolute;left:140px;top:269px" width="9" height="6"><path d="M0 0 H9 L4.5 5 Z" fill="#555"/></svg>
<div style="position:absolute;left:179px;top:265px;width:3px;height:3px;background:#a8a8a8"></div>
<div style="position:absolute;left:179px;top:271px;width:3px;height:3px;background:#a8a8a8"></div>
<div style="position:absolute;left:179px;top:277px;width:3px;height:3px;background:#a8a8a8"></div>
<div style="position:absolute;left:204px;top:255px;width:164px;height:35px;background:#fff;border:1px solid #c6c6c6;box-sizing:border-box"></div>
<svg style="position:absolute;left:221px;top:264px" width="20" height="18" fill="none" stroke="#c4c4c4" stroke-width="2.2" stroke-linecap="round"><path d="M2 1.5 L18 16 M17.5 1.5 L2 16"/></svg>
<svg style="position:absolute;left:275px;top:263px" width="22" height="19" fill="none" stroke="#c8c8c8" stroke-width="3" stroke-linecap="round" stroke-linejoin="round"><path d="M2.5 10 L8 15.5 L19 3"/></svg>
<div style="position:absolute;left:330px;top:260px;font:italic 24px/24px 'Liberation Serif', serif;color:#666">fx</div>
<div style="position:absolute;left:372px;top:255px;width:1540px;height:35px;background:#fff;border:1px solid #c6c6c6;border-right:none;box-sizing:border-box"></div>
<svg style="position:absolute;left:1894px;top:270px" width="12" height="8" fill="none" stroke="#6e6e6e" stroke-width="2.4"><path d="M1 1 L6 6 L11 1"/></svg>
<div style="position:absolute;left:0px;top:305px;width:1889px;height:23px;background:#e6e6e6"></div>
<svg style="position:absolute;left:14px;top:309px" width="17" height="17"><path d="M16 0 V16 H0 Z" fill="#b4b4b4"/></svg>
<div style="position:absolute;left:34px;top:329px;width:1855px;height:612px;background:#fff"></div>
<div style="position:absolute;left:33px;top:305px;width:1px;height:23px;background:#c6c6c6"></div>
<div style="position:absolute;left:222px;top:305px;width:1px;height:23px;background:#c6c6c6"></div>
<div style="position:absolute;left:475px;top:305px;width:1px;height:23px;background:#c6c6c6"></div>
<div style="position:absolute;left:755px;top:305px;width:1px;height:23px;background:#c6c6c6"></div>
<div style="position:absolute;left:1012px;top:305px;width:1px;height:23px;background:#c6c6c6"></div>
<div style="position:absolute;left:1389px;top:305px;width:1px;height:23px;background:#c6c6c6"></div>
<div style="position:absolute;left:1719px;top:305px;width:1px;height:23px;background:#c6c6c6"></div>
<div style="position:absolute;left:1390px;top:305px;width:329px;height:23px;background:#d2d2d2"></div>
<div style="position:absolute;left:1389px;top:326px;width:331px;height:2px;background:#217346"></div>
<div style="position:absolute;left:-872.0px;width:2000px;text-align:center;top:309.30px;font:normal 15px/15px 'Liberation Sans', sans-serif;color:#262626;white-space:nowrap;"><span id="colhA" style="display:inline-block;transform:scaleX(1.0000);transform-origin:center;">A</span></div>
<div style="position:absolute;left:-651.0px;width:2000px;text-align:center;top:309.30px;font:normal 15px/15px 'Liberation Sans', sans-serif;color:#262626;white-space:nowrap;"><span id="colhB" style="display:inline-block;transform:scaleX(1.0000);transform-origin:center;">B</span></div>
<div style="position:absolute;left:-384.5px;width:2000px;text-align:center;top:309.30px;font:normal 15px/15px 'Liberation Sans', sans-serif;color:#262626;white-space:nowrap;"><span id="colhC" style="display:inline-block;transform:scaleX(1.0000);transform-origin:center;">C</span></div>
<div style="position:absolute;left:-116.0px;width:2000px;text-align:center;top:309.30px;font:normal 15px/15px 'Liberation Sans', sans-serif;color:#262626;white-space:nowrap;"><span id="colhD" style="display:inline-block;transform:scaleX(1.0000);transform-origin:center;">D</span></div>
<div style="position:absolute;left:201.0px;width:2000px;text-align:center;top:309.30px;font:normal 15px/15px 'Liberation Sans', sans-serif;color:#262626;white-space:nowrap;"><span id="colhE" style="display:inline-block;transform:scaleX(1.0000);transform-origin:center;">E</span></div>
<div style="position:absolute;left:554.5px;width:2000px;text-align:center;top:309.30px;font:normal 15px/15px 'Liberation Sans', sans-serif;color:#217346;white-space:nowrap;"><span id="colhF" style="display:inline-block;transform:scaleX(1.0000);transform-origin:center;">F</span></div>
<div style="position:absolute;left:0px;top:327px;width:1889px;height:1px;background:#bdbdbd"></div>
<div style="position:absolute;left:0px;top:351px;width:33px;height:1px;background:#c6c6c6"></div>
<div style="position:absolute;left:-982.5px;width:2000px;text-align:center;top:333.38px;font:normal 15.5px/15.5px 'Liberation Sans', sans-serif;color:#262626;white-space:nowrap;"><span id="rowh1" style="display:inline-block;transform:scaleX(1.0000);transform-origin:center;">1</span></div>
<div style="position:absolute;left:0px;top:374px;width:33px;height:1px;background:#c6c6c6"></div>
<div style="position:absolute;left:-982.5px;width:2000px;text-align:center;top:356.38px;font:normal 15.5px/15.5px 'Liberation Sans', sans-serif;color:#262626;white-space:nowrap;"><span id="rowh2" style="display:inline-block;transform:scaleX(1.0000);transform-origin:center;">2</span></div>
<div style="position:absolute;left:0px;top:397px;width:33px;height:1px;background:#c6c6c6"></div>
<div style="position:absolute;left:-982.5px;width:2000px;text-align:center;top:379.38px;font:normal 15.5px/15.5px 'Liberation Sans', sans-serif;color:#262626;white-space:nowrap;"><span id="rowh3" style="display:inline-block;transform:scaleX(1.0000);transform-origin:center;">3</span></div>
<div style="position:absolute;left:0px;top:420px;width:33px;height:1px;background:#c6c6c6"></div>
<div style="position:absolute;left:-982.5px;width:2000px;text-align:center;top:402.38px;font:normal 15.5px/15.5px 'Liberation Sans', sans-serif;color:#262626;white-space:nowrap;"><span id="rowh4" style="display:inline-block;transform:scaleX(1.0000);transform-origin:center;">4</span></div>
<div style="position:absolute;left:0px;top:443px;width:33px;height:1px;background:#c6c6c6"></div>
<div style="position:absolute;left:-982.5px;width:2000px;text-align:center;top:425.38px;font:normal 15.5px/15.5px 'Liberation Sans', sans-serif;color:#262626;white-space:nowrap;"><span id="rowh5" style="display:inline-block;transform:scaleX(1.0000);transform-origin:center;">5</span></div>
<div style="position:absolute;left:0px;top:466px;width:33px;height:1px;background:#c6c6c6"></div>
<div style="position:absolute;left:-982.5px;width:2000px;text-align:center;top:448.38px;font:normal 15.5px/15.5px 'Liberation Sans', sans-serif;color:#262626;white-space:nowrap;"><span id="rowh6" style="display:inline-block;transform:scaleX(1.0000);transform-origin:center;">6</span></div>
<div style="position:absolute;left:0px;top:489px;width:33px;height:1px;background:#c6c6c6"></div>
<div style="position:absolute;left:-982.5px;width:2000px;text-align:center;top:471.38px;font:normal 15.5px/15.5px 'Liberation Sans', sans-serif;color:#262626;white-space:nowrap;"><span id="rowh7" style="display:inline-block;transform:scaleX(1.0000);transform-origin:center;">7</span></div>
<div style="position:absolute;left:0px;top:512px;width:33px;height:1px;background:#c6c6c6"></div>
<div style="position:absolute;left:-982.5px;width:2000px;text-align:center;top:494.38px;font:normal 15.5px/15.5px 'Liberation Sans', sans-serif;color:#262626;white-space:nowrap;"><span id="rowh8" style="display:inline-block;transform:scaleX(1.0000);transform-origin:center;">8</span></div>
<div style="position:absolute;left:0px;top:535px;width:33px;height:1px;background:#c6c6c6"></div>
<div style="position:absolute;left:-982.5px;width:2000px;text-align:center;top:517.38px;font:normal 15.5px/15.5px 'Liberation Sans', sans-serif;color:#262626;white-space:nowrap;"><span id="rowh9" style="display:inline-block;transform:scaleX(1.0000);transform-origin:center;">9</span></div>
<div style="position:absolute;left:0px;top:558px;width:33px;height:1px;background:#c6c6c6"></div>
<div style="position:absolute;left:-982.5px;width:2000px;text-align:center;top:540.38px;font:normal 15.5px/15.5px 'Liberation Sans', sans-serif;color:#262626;white-space:nowrap;"><span id="rowh10" style="display:inline-block;transform:scaleX(1.0000);transform-origin:center;">10</span></div>
<div style="position:absolute;left:0px;top:581px;width:33px;height:1px;background:#c6c6c6"></div>
<div style="position:absolute;left:-982.5px;width:2000px;text-align:center;top:563.38px;font:normal 15.5px/15.5px 'Liberation Sans', sans-serif;color:#262626;white-space:nowrap;"><span id="rowh11" style="display:inline-block;transform:scaleX(1.0000);transform-origin:center;">11</span></div>
<div style="position:absolute;left:0px;top:582px;width:33px;height:22px;background:#d2d2d2"></div>
<div style="position:absolute;left:0px;top:604px;width:33px;height:1px;background:#c6c6c6"></div>
<div style="position:absolute;left:-982.5px;width:2000px;text-align:center;top:586.38px;font:normal 15.5px/15.5px 'Liberation Sans', sans-serif;color:#217346;white-space:nowrap;"><span id="rowh12" style="display:inline-block;transform:scaleX(1.0000);transform-origin:center;">12</span></div>
<div style="position:absolute;left:0px;top:627px;width:33px;height:1px;background:#c6c6c6"></div>
<div style="position:absolute;left:-982.5px;width:2000px;text-align:center;top:609.38px;font:normal 15.5px/15.5px 'Liberation Sans', sans-serif;color:#262626;white-space:nowrap;"><span id="rowh13" style="display:inline-block;transform:scaleX(1.0000);transform-origin:center;">13</span></div>
<div style="position:absolute;left:0px;top:650px;width:33px;height:1px;background:#c6c6c6"></div>
<div style="position:absolute;left:-982.5px;width:2000px;text-align:center;top:632.38px;font:normal 15.5px/15.5px 'Liberation Sans', sans-serif;color:#262626;white-space:nowrap;"><span id="rowh14" style="display:inline-block;transform:scaleX(1.0000);transform-origin:center;">14</span></div>
<div style="position:absolute;left:0px;top:673px;width:33px;height:1px;background:#c6c6c6"></div>
<div style="position:absolute;left:-982.5px;width:2000px;text-align:center;top:655.38px;font:normal 15.5px/15.5px 'Liberation Sans', sans-serif;color:#262626;white-space:nowrap;"><span id="rowh15" style="display:inline-block;transform:scaleX(1.0000);transform-origin:center;">15</span></div>
<div style="position:absolute;left:0px;top:696px;width:33px;height:1px;background:#c6c6c6"></div>
<div style="position:absolute;left:-982.5px;width:2000px;text-align:center;top:678.38px;font:normal 15.5px/15.5px 'Liberation Sans', sans-serif;color:#262626;white-space:nowrap;"><span id="rowh16" style="display:inline-block;transform:scaleX(1.0000);transform-origin:center;">16</span></div>
<div style="position:absolute;left:0px;top:719px;width:33px;height:1px;background:#c6c6c6"></div>
<div style="position:absolute;left:-982.5px;width:2000px;text-align:center;top:701.38px;font:normal 15.5px/15.5px 'Liberation Sans', sans-serif;color:#262626;white-space:nowrap;"><span id="rowh17" style="display:inline-block;transform:scaleX(1.0000);transform-origin:center;">17</span></div>
<div style="position:absolute;left:0px;top:742px;width:33px;height:1px;background:#c6c6c6"></div>
<div style="position:absolute;left:-982.5px;width:2000px;text-align:center;top:724.38px;font:normal 15.5px/15.5px 'Liberation Sans', sans-serif;color:#262626;white-space:nowrap;"><span id="rowh18" style="display:inline-block;transform:scaleX(1.0000);transform-origin:center;">18</span></div>
<div style="position:absolute;left:0px;top:765px;width:33px;height:1px;background:#c6c6c6"></div>
<div style="position:absolute;left:-982.5px;width:2000px;text-align:center;top:747.38px;font:normal 15.5px/15.5px 'Liberation Sans', sans-serif;color:#262626;white-space:nowrap;"><span id="rowh19" style="display:inline-block;transform:scaleX(1.0000);transform-origin:center;">19</span></div>
<div style="position:absolute;left:0px;top:788px;width:33px;height:1px;background:#c6c6c6"></div>
<div style="position:absolute;left:-982.5px;width:2000px;text-align:center;top:770.38px;font:normal 15.5px/15.5px 'Liberation Sans', sans-serif;color:#262626;white-space:nowrap;"><span id="rowh20" style="display:inline-block;transform:scaleX(1.0000);transform-origin:center;">20</span></div>
<div style="position:absolute;left:0px;top:811px;width:33px;height:1px;background:#c6c6c6"></div>
<div style="position:absolute;left:-982.5px;width:2000px;text-align:center;top:793.38px;font:normal 15.5px/15.5px 'Liberation Sans', sans-serif;color:#262626;white-space:nowrap;"><span id="rowh21" style="display:inline-block;transform:scaleX(1.0000);transform-origin:center;">21</span></div>
<div style="position:absolute;left:0px;top:834px;width:33px;height:1px;background:#c6c6c6"></div>
<div style="position:absolute;left:-982.5px;width:2000px;text-align:center;top:816.38px;font:normal 15.5px/15.5px 'Liberation Sans', sans-serif;color:#262626;white-space:nowrap;"><span id="rowh22" style="display:inline-block;transform:scaleX(1.0000);transform-origin:center;">22</span></div>
<div style="position:absolute;left:0px;top:857px;width:33px;height:1px;background:#c6c6c6"></div>
<div style="position:absolute;left:-982.5px;width:2000px;text-align:center;top:839.38px;font:normal 15.5px/15.5px 'Liberation Sans', sans-serif;color:#262626;white-space:nowrap;"><span id="rowh23" style="display:inline-block;transform:scaleX(1.0000);transform-origin:center;">23</span></div>
<div style="position:absolute;left:0px;top:880px;width:33px;height:1px;background:#c6c6c6"></div>
<div style="position:absolute;left:-982.5px;width:2000px;text-align:center;top:862.38px;font:normal 15.5px/15.5px 'Liberation Sans', sans-serif;color:#262626;white-space:nowrap;"><span id="rowh24" style="display:inline-block;transform:scaleX(1.0000);transform-origin:center;">24</span></div>
<div style="position:absolute;left:0px;top:903px;width:33px;height:1px;background:#c6c6c6"></div>
<div style="position:absolute;left:-982.5px;width:2000px;text-align:center;top:885.38px;font:normal 15.5px/15.5px 'Liberation Sans', sans-serif;color:#262626;white-space:nowrap;"><span id="rowh25" style="display:inline-block;transform:scaleX(1.0000);transform-origin:center;">25</span></div>
<div style="position:absolute;left:0px;top:926px;width:33px;height:1px;background:#c6c6c6"></div>
<div style="position:absolute;left:-982.5px;width:2000px;text-align:center;top:908.38px;font:normal 15.5px/15.5px 'Liberation Sans', sans-serif;color:#262626;white-space:nowrap;"><span id="rowh26" style="display:inline-block;transform:scaleX(1.0000);transform-origin:center;">26</span></div>
<div style="position:absolute;left:0px;top:949px;width:33px;height:1px;background:#c6c6c6"></div>
<div style="position:absolute;left:-982.5px;width:2000px;text-align:center;top:931.38px;font:normal 15.5px/15.5px 'Liberation Sans', sans-serif;color:#262626;white-space:nowrap;"><span id="rowh27" style="display:inline-block;transform:scaleX(1.0000);transform-origin:center;">27</span></div>
<div style="position:absolute;left:33px;top:305px;width:1px;height:636px;background:#9b9b9b"></div>
<div style="position:absolute;left:32px;top:581px;width:2px;height:24px;background:#217346"></div>
<div style="position:absolute;left:34px;top:351px;width:1855px;height:1px;background:#d4d4d4"></div>
<div style="position:absolute;left:34px;top:374px;width:1855px;height:1px;background:#d4d4d4"></div>
<div style="position:absolute;left:34px;top:397px;width:1855px;height:1px;background:#d4d4d4"></div>
<div style="position:absolute;left:34px;top:420px;width:1855px;height:1px;background:#d4d4d4"></div>
<div style="position:absolute;left:34px;top:443px;width:1855px;height:1px;background:#d4d4d4"></div>
<div style="position:absolute;left:34px;top:466px;width:1855px;height:1px;background:#d4d4d4"></div>
<div style="position:absolute;left:34px;top:489px;width:1855px;height:1px;background:#d4d4d4"></div>
<div style="position:absolute;left:34px;top:512px;width:1855px;height:1px;background:#d4d4d4"></div>
<div style="position:absolute;left:34px;top:535px;width:1855px;height:1px;background:#d4d4d4"></div>
<div style="position:absolute;left:34px;top:558px;width:1855px;height:1px;background:#d4d4d4"></div>
<div style="position:absolute;left:34px;top:581px;width:1855px;height:1px;background:#d4d4d4"></div>
<div style="position:absolute;left:34px;top:604px;width:1855px;height:1px;background:#d4d4d4"></div>
<div style="position:absolute;left:34px;top:627px;width:1855px;height:1px;background:#d4d4d4"></div>
<div style="position:absolute;left:34px;top:650px;width:1855px;height:1px;background:#d4d4d4"></div>
<div style="position:absolute;left:34px;top:673px;width:1855px;height:1px;background:#d4d4d4"></div>
<div style="position:absolute;left:34px;top:696px;width:1855px;height:1px;background:#d4d4d4"></div>
<div style="position:absolute;left:34px;top:719px;width:1855px;height:1px;background:#d4d4d4"></div>
<div style="position:absolute;left:34px;top:742px;width:1855px;height:1px;background:#d4d4d4"></div>
<div style="position:absolute;left:34px;top:765px;width:1855px;height:1px;background:#d4d4d4"></div>
<div style="position:absolute;left:34px;top:788px;width:1855px;height:1px;background:#d4d4d4"></div>
<div style="position:absolute;left:34px;top:811px;width:1855px;height:1px;background:#d4d4d4"></div>
<div style="position:absolute;left:34px;top:834px;width:1855px;height:1px;background:#d4d4d4"></div>
<div style="position:absolute;left:34px;top:857px;width:1855px;height:1px;background:#d4d4d4"></div>
<div style="position:absolute;left:34px;top:880px;width:1855px;height:1px;background:#d4d4d4"></div>
<div style="position:absolute;left:34px;top:903px;width:1855px;height:1px;background:#d4d4d4"></div>
<div style="position:absolute;left:34px;top:926px;width:1855px;height:1px;background:#d4d4d4"></div>
<div style="position:absolute;left:222px;top:351px;width:1px;height:590px;background:#d4d4d4"></div>
<div style="position:absolute;left:475px;top:351px;width:1px;height:590px;background:#d4d4d4"></div>
<div style="position:absolute;left:755px;top:351px;width:1px;height:590px;background:#d4d4d4"></div>
<div style="position:absolute;left:1012px;top:351px;width:1px;height:590px;background:#d4d4d4"></div>
<div style="position:absolute;left:1389px;top:351px;width:1px;height:590px;background:#d4d4d4"></div>
<div style="position:absolute;left:1719px;top:351px;width:1px;height:590px;background:#d4d4d4"></div>
<div style="position:absolute;left:34px;top:329px;width:188px;height:22px;background:#d9d9d9"></div>
<div style="position:absolute;left:223px;top:329px;width:252px;height:22px;background:#ffff00"></div>
<div style="position:absolute;left:476px;top:329px;width:279px;height:22px;background:#ffff00"></div>
<div style="position:absolute;left:756px;top:329px;width:256px;height:22px;background:#ffff00"></div>
<div style="position:absolute;left:1013px;top:329px;width:376px;height:22px;background:#ffff00"></div>
<div style="position:absolute;left:1390px;top:329px;width:329px;height:22px;background:#ffff00"></div>
<div style="position:absolute;left:1720px;top:329px;width:169px;height:22px;background:#d9d9d9"></div>
<div style="position:absolute;left:34px;top:352px;width:1855px;height:22px;background:#ededed"></div>
<div style="position:absolute;left:34px;top:328px;width:1855px;height:1px;background:#a6a6a6"></div>
<div style="position:absolute;left:34px;top:350px;width:1855px;height:2px;background:#a6a6a6"></div>
<div style="position:absolute;left:34px;top:374px;width:1855px;height:1px;background:#a6a6a6"></div>
<div style="position:absolute;left:222px;top:328px;width:1px;height:47px;background:#a6a6a6"></div>
<div style="position:absolute;left:475px;top:328px;width:1px;height:47px;background:#a6a6a6"></div>
<div style="position:absolute;left:755px;top:328px;width:1px;height:47px;background:#a6a6a6"></div>
<div style="position:absolute;left:1012px;top:328px;width:1px;height:47px;background:#a6a6a6"></div>
<div style="position:absolute;left:1389px;top:328px;width:1px;height:47px;background:#a6a6a6"></div>
<div style="position:absolute;left:1719px;top:328px;width:1px;height:47px;background:#a6a6a6"></div>
<div style="position:absolute;left:1889px;top:328px;width:1px;height:47px;background:#a6a6a6"></div>
<div style="position:absolute;left:200px;top:329px;width:22px;height:21px;background:linear-gradient(#ffffff,#eceef2);border-left:1px solid #c0c0c0;box-sizing:border-box"></div>
<svg style="position:absolute;left:207px;top:338px" width="8" height="5"><path d="M0 0 H8 L4 4.5 Z" fill="#606060"/></svg>
<div style="position:absolute;left:453px;top:329px;width:22px;height:21px;background:linear-gradient(#ffffff,#eceef2);border-left:1px solid #c0c0c0;box-sizing:border-box"></div>
<svg style="position:absolute;left:460px;top:338px" width="8" height="5"><path d="M0 0 H8 L4 4.5 Z" fill="#606060"/></svg>
<div style="position:absolute;left:733px;top:329px;width:22px;height:21px;background:linear-gradient(#ffffff,#eceef2);border-left:1px solid #c0c0c0;box-sizing:border-box"></div>
<svg style="position:absolute;left:740px;top:338px" width="8" height="5"><path d="M0 0 H8 L4 4.5 Z" fill="#606060"/></svg>
<div style="position:absolute;left:990px;top:329px;width:22px;height:21px;background:linear-gradient(#ffffff,#eceef2);border-left:1px solid #c0c0c0;box-sizing:border-box"></div>
<svg style="position:absolute;left:997px;top:338px" width="8" height="5"><path d="M0 0 H8 L4 4.5 Z" fill="#606060"/></svg>
<div style="position:absolute;left:1367px;top:329px;width:22px;height:21px;background:linear-gradient(#ffffff,#eceef2);border-left:1px solid #c0c0c0;box-sizing:border-box"></div>
<svg style="position:absolute;left:1374px;top:338px" width="8" height="5"><path d="M0 0 H8 L4 4.5 Z" fill="#606060"/></svg>
<div style="position:absolute;left:1697px;top:329px;width:22px;height:21px;background:linear-gradient(#ffffff,#eceef2);border-left:1px solid #c0c0c0;box-sizing:border-box"></div>
<svg style="position:absolute;left:1704px;top:338px" width="8" height="5"><path d="M0 0 H8 L4 4.5 Z" fill="#606060"/></svg>
<div style="position:absolute;left:47px;top:333.53px;font:bold 14.5px/14.5px 'Liberation Sans', sans-serif;color:#000;white-space:nowrap;"><span id="h_A" style="display:inline-block;transform:scaleX(1.0699);transform-origin:left;">Tên công việc định k</span></div>
<div style="position:absolute;left:272.8px;top:333.53px;font:bold 14.5px/14.5px 'Liberation Sans', sans-serif;color:#ff0000;white-space:nowrap;"><span id="h_B" style="display:inline-block;transform:scaleX(1.1259);transform-origin:left;">Đơn vị thực hiện (*)</span></div>
<div style="position:absolute;left:567px;top:333.53px;font:bold 14.5px/14.5px 'Liberation Sans', sans-serif;color:#ff0000;white-space:nowrap;"><span id="h_C" style="display:inline-block;transform:scaleX(1.0899);transform-origin:left;">Công việc (*)</span></div>
<div style="position:absolute;left:798.6px;top:333.53px;font:bold 14.5px/14.5px 'Liberation Sans', sans-serif;color:#ff0000;white-space:nowrap;"><span id="h_D" style="display:inline-block;transform:scaleX(1.0962);transform-origin:left;">Khu vực chức năng (*)</span></div>
<div style="position:absolute;left:1035.6px;top:333.53px;font:bold 14.5px/14.5px 'Liberation Sans', sans-serif;color:#ff0000;white-space:nowrap;"><span id="h_E" style="display:inline-block;transform:scaleX(1.1224);transform-origin:left;">Thời gian bắt đầu (dd/MM/yyyy HH:mm:ss)</span></div>
<div style="position:absolute;left:1421.7px;top:333.53px;font:bold 14.5px/14.5px 'Liberation Sans', sans-serif;color:#ff0000;white-space:nowrap;"><span id="h_F" style="display:inline-block;transform:scaleX(1.1368);transform-origin:left;">Thời hạn (dd/MM/yyyy HH:mm:ss)</span></div>
<div style="position:absolute;left:226.6px;top:356.20px;font:normal 15px/15px 'Liberation Sans', sans-serif;color:#000;white-space:nowrap;"><span id="r2_B" style="display:inline-block;transform:scaleX(1.0800);transform-origin:left;">BV| Bảo vệ</span></div>
<div style="position:absolute;left:479.3px;top:356.20px;font:normal 15px/15px 'Liberation Sans', sans-serif;color:#000;white-space:nowrap;"><span id="r2_C" style="display:inline-block;transform:scaleX(1.0610);transform-origin:left;">TOP173| AN015_Rà soát các nguy cơ</span></div>
<div style="position:absolute;left:759.7px;top:356.20px;font:normal 15px/15px 'Liberation Sans', sans-serif;color:#000;white-space:nowrap;"><span id="r2_D" style="display:inline-block;transform:scaleX(1.0368);transform-origin:left;">TBH-HAM| TBH &gt; Hầm TGX</span></div>
<div style="position:absolute;left:1016.3px;top:356.20px;font:normal 15px/15px 'Liberation Sans', sans-serif;color:#000;white-space:nowrap;"><span id="r2_E" style="display:inline-block;transform:scaleX(1.1168);transform-origin:left;">01/01/2025 11:30:05</span></div>
<div style="position:absolute;left:1393.4px;top:356.20px;font:normal 15px/15px 'Liberation Sans', sans-serif;color:#000;white-space:nowrap;"><span id="r2_F" style="display:inline-block;transform:scaleX(1.1168);transform-origin:left;">05/01/2025 11:30:05</span></div>
<div style="position:absolute;left:1743px;top:333.53px;font:bold 14.5px/14.5px 'Liberation Sans', sans-serif;color:#000;white-space:nowrap;"><span id="h_G" style="display:inline-block;transform:scaleX(1.0976);transform-origin:left;">Tài sản (Nếu danh mục)</span></div>
<div style="position:absolute;left:1388px;top:580px;width:333px;height:25px;border:2px solid #217346;box-sizing:border-box"></div>
<div style="position:absolute;left:1715px;top:600px;width:7px;height:7px;background:#217346;border:1px solid #fff;box-sizing:content-box"></div>
<div style="position:absolute;left:1889px;top:305px;width:23px;height:671px;background:#e6e6e6"></div>
<div style="position:absolute;left:1889px;top:328px;width:1px;height:613px;background:#9b9b9b"></div>
<div style="position:absolute;left:1892px;top:306px;width:20px;height:636px;background:#f0f0f0"></div>
<div style="position:absolute;left:1892px;top:306px;width:20px;height:27px;background:#fff;border:1px solid #999;border-bottom:2px solid #999;border-right:none;box-sizing:border-box"></div>
<svg style="position:absolute;left:1898px;top:315px" width="12" height="7"><path d="M0 6.5 H11 L5.5 0.5 Z" fill="#222"/></svg>
<div style="position:absolute;left:1892px;top:333px;width:20px;height:576px;background:#fff;border:1px solid #999;border-right:none;border-top:none;box-sizing:border-box"></div>
<div style="position:absolute;left:1892px;top:918px;width:20px;height:24px;background:#fff;border:1px solid #999;border-right:none;box-sizing:border-box"></div>
<svg style="position:absolute;left:1899px;top:927px" width="12" height="7"><path d="M0 0.5 H11 L5.5 6.5 Z" fill="#222"/></svg>
<div style="position:absolute;left:0px;top:941px;width:1912px;height:34px;background:#e6e6e6"></div>
<div style="position:absolute;left:0px;top:941px;width:1889px;height:1px;background:#9b9b9b"></div>
<div style="position:absolute;left:0px;top:975px;width:1912px;height:1px;background:#c8c6c4"></div>
<svg style="position:absolute;left:29px;top:952px" width="7" height="12"><path d="M6 0 V11 L0 5.5 Z" fill="#c2c2c2"/></svg>
<svg style="position:absolute;left:63px;top:952px" width="8" height="12"><path d="M0.5 0 V11 L6.5 5.5 Z" fill="#1e6b41"/></svg>
<div style="position:absolute;left:118px;top:941px;width:153px;height:31px;background:#fff;border-left:1px solid #9b9b9b;box-sizing:border-box"></div>
<div style="position:absolute;left:121px;top:945px;width:147px;height:24px;background:linear-gradient(#fff 0%,#ffd0d0 40%,#ff8a8a 100%)"></div>
<div style="position:absolute;left:118px;top:970px;width:153px;height:2px;background:#217346"></div>
<div style="position:absolute;left:130.5px;top:946.92px;font:bold 19px/19px 'Liberation Sans', sans-serif;color:#1e6b41;white-space:nowrap;"><span id="tab_imp" style="display:inline-block;transform:scaleX(1.0200);transform-origin:left;">Import_KHDK</span></div>
<div style="position:absolute;left:290.5px;top:946.92px;font:normal 19px/19px 'Liberation Sans', sans-serif;color:#3b3a39;white-space:nowrap;"><span id="stab2" style="display:inline-block;transform:scaleX(1.0203);transform-origin:left;">Danh mục công việc</span></div>
<div style="position:absolute;left:486px;top:945px;width:1px;height:25px;background:#b0b0b0"></div>
<div style="position:absolute;left:506px;top:946.92px;font:normal 19px/19px 'Liberation Sans', sans-serif;color:#3b3a39;white-space:nowrap;"><span id="stab3" style="display:inline-block;transform:scaleX(1.0123);transform-origin:left;">Checklist công việc</span></div>
<div style="position:absolute;left:692px;top:945px;width:1px;height:25px;background:#b0b0b0"></div>
<div style="position:absolute;left:711px;top:946.92px;font:normal 19px/19px 'Liberation Sans', sans-serif;color:#3b3a39;white-space:nowrap;"><span id="stab4" style="display:inline-block;transform:scaleX(1.0000);transform-origin:left;">Checklist khu vực</span></div>
<div style="position:absolute;left:882px;top:945px;width:1px;height:25px;background:#b0b0b0"></div>
<div style="position:absolute;left:900.5px;top:946.92px;font:normal 19px/19px 'Liberation Sans', sans-serif;color:#3b3a39;white-space:nowrap;"><span id="stab5" style="display:inline-block;transform:scaleX(0.9915);transform-origin:left;">Tuần làm việc</span></div>
<div style="position:absolute;left:1038px;top:945px;width:1px;height:25px;background:#b0b0b0"></div>
<div style="position:absolute;left:1057px;top:946.92px;font:normal 19px/19px 'Liberation Sans', sans-serif;color:#3b3a39;white-space:nowrap;"><span id="stab6" style="display:inline-block;transform:scaleX(0.6154);transform-origin:left;">E</span></div>
<div style="position:absolute;left:1075px;top:960px;width:3px;height:3px;background:#1e6b41"></div>
<div style="position:absolute;left:1081px;top:960px;width:3px;height:3px;background:#1e6b41"></div>
<div style="position:absolute;left:1087px;top:960px;width:3px;height:3px;background:#1e6b41"></div>
<svg style="position:absolute;left:1103px;top:946px" width="25" height="25" fill="none" stroke="#6e6e6e" stroke-width="1.5"><circle cx="12" cy="12" r="10.5"/><path d="M12 6.5 V17.5 M6.5 12 H17.5"/></svg>
<div style="position:absolute;left:1148px;top:950px;width:2.5px;height:2.5px;background:#a0a0a0;border-radius:50%"></div>
<div style="position:absolute;left:1148px;top:956px;width:2.5px;height:2.5px;background:#a0a0a0;border-radius:50%"></div>
<div style="position:absolute;left:1148px;top:962px;width:2.5px;height:2.5px;background:#a0a0a0;border-radius:50%"></div>
<div style="position:absolute;left:1168px;top:945px;width:721px;height:25px;background:#f0f0f0"></div>
<div style="position:absolute;left:1168px;top:945px;width:26px;height:25px;background:#fff;border:1px solid #999;box-sizing:border-box"></div>
<svg style="position:absolute;left:1176px;top:952px" width="7" height="12"><path d="M6.5 0 V11 L0.5 5.5 Z" fill="#222"/></svg>
<div style="position:absolute;left:1193px;top:945px;width:363px;height:25px;background:#fff;border:1px solid #999;box-sizing:border-box"></div>
<div style="position:absolute;left:1866px;top:945px;width:25px;height:25px;background:#fff;border:1px solid #999;box-sizing:border-box"></div>
<svg style="position:absolute;left:1876px;top:952px" width="7" height="12"><path d="M0.5 0 V11 L6.5 5.5 Z" fill="#222"/></svg>
<div style="position:absolute;left:1748px;top:922.5px;width:59px;height:38px;background:#fff;border:2px solid #7d7b79;border-radius:6px;box-sizing:border-box;box-shadow:0 5px 14px rgba(0,0,0,0.2)"></div>
<div style="position:absolute;left:1753px;top:933.99px;font:normal 19.5px/19.5px 'Liberation Sans', sans-serif;color:#605e5c;white-space:nowrap;"><span id="t_zoom" style="display:inline-block;transform:scaleX(0.9500);transform-origin:left;">Zoom</span></div>
<div style="position:absolute;left:0px;top:976px;width:1912px;height:14px;background:#f3f2f1"></div>
<div style="position:absolute;left:18px;top:986.76px;font:normal 16px/16px 'Liberation Sans', sans-serif;color:#3b3a39;white-space:nowrap;"><span id="st_ready" style="display:inline-block;transform:scaleX(0.9783);transform-origin:left;">Ready</span></div>
<svg style="position:absolute;left:85px;top:980px" width="24" height="10" fill="none" stroke="#3b3a39" stroke-width="1.6"><circle cx="11.2" cy="4.6" r="2.6"/><path d="M3.5 12 Q1.5 7 5 6.5 Q8 7 11.2 9 Q14.5 7 17.5 6.5 Q21 7 19 12"/></svg>
<div style="position:absolute;left:115px;top:986.76px;font:normal 16px/16px 'Liberation Sans', sans-serif;color:#3b3a39;white-space:nowrap;"><span id="st_acc" style="display:inline-block;transform:scaleX(0.9827);transform-origin:left;">Accessibility: Investigate</span></div>
<div style="position:absolute;left:1476px;top:976px;width:59px;height:14px;background:#d2d0ce"></div>
<svg style="position:absolute;left:1493px;top:981px" width="25" height="10" fill="none" stroke="#3b3a39" stroke-width="1.5"><path d="M1 10 V1 H24 V10 M1 6 H24 M9 1 V10 M16 1 V10"/></svg>
<svg style="position:absolute;left:1554px;top:981px" width="22" height="10" fill="none" stroke="#3b3a39" stroke-width="1.5"><path d="M1 10 V1 H21 V10 M5 10 V5 H17 V10"/></svg>
<svg style="position:absolute;left:1614px;top:981px" width="22" height="10" fill="none" stroke="#3b3a39" stroke-width="1.5"><path d="M1 10 V1 H21 V10 M8 1 V10 M14 1 V10"/></svg>
<div style="position:absolute;left:1738px;top:983px;width:8px;height:7px;background:#3b3a39"></div>
<div style="position:absolute;left:1756px;top:988px;width:2px;height:2px;background:#3b3a39"></div>
<div style="position:absolute;left:1844px;top:986px;width:1px;height:4px;background:#3b3a39"></div>
<div style="position:absolute;left:1869px;top:986.76px;font:normal 16px/16px 'Liberation Sans', sans-serif;color:#3b3a39;white-space:nowrap;"><span id="st_zoom" style="display:inline-block;transform:scaleX(1.0938);transform-origin:left;">91%</span></div>
</body></html>
